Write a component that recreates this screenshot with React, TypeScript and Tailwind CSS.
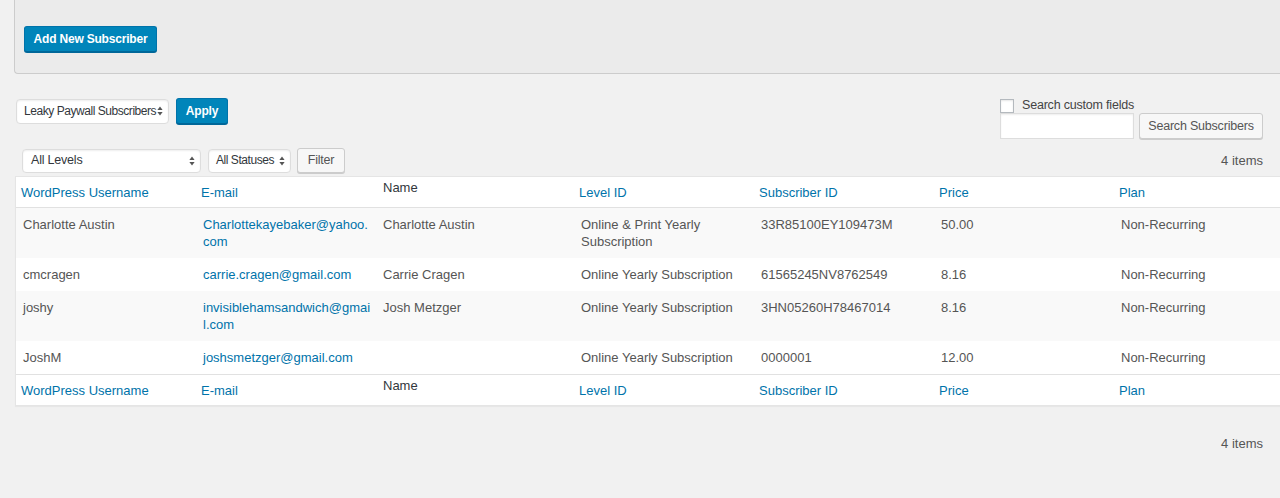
import React from 'react';

// Leaky Paywall subscriber list (wp-admin style)

type Row = {
  user: string;
  email: string[];
  name: string;
  level: string;
  subId: string;
  price: string;
  plan: string;
};

const rows: Row[] = [
  {
    user: 'Charlotte Austin',
    email: ['Charlottekayebaker@yahoo.', 'com'],
    name: 'Charlotte Austin',
    level: 'Online & Print Yearly Subscription',
    subId: '33R85100EY109473M',
    price: '50.00',
    plan: 'Non-Recurring',
  },
  {
    user: 'cmcragen',
    email: ['carrie.cragen@gmail.com'],
    name: 'Carrie Cragen',
    level: 'Online Yearly Subscription',
    subId: '61565245NV8762549',
    price: '8.16',
    plan: 'Non-Recurring',
  },
  {
    user: 'joshy',
    email: ['invisiblehamsandwich@gmai', 'l.com'],
    name: 'Josh Metzger',
    level: 'Online Yearly Subscription',
    subId: '3HN05260H78467014',
    price: '8.16',
    plan: 'Non-Recurring',
  },
  {
    user: 'JoshM',
    email: ['joshsmetzger@gmail.com'],
    name: '',
    level: 'Online Yearly Subscription',
    subId: '0000001',
    price: '12.00',
    plan: 'Non-Recurring',
  },
];

const SelectArrows = () => (
  <svg width="6" height="10" viewBox="0 0 6 10" className="shrink-0">
    <path d="M3 0.5 L5.6 4 L0.4 4 Z" fill="#555" />
    <path d="M3 9.5 L5.6 6 L0.4 6 Z" fill="#555" />
  </svg>
);

const FakeSelect = ({
  label,
  className,
  small = false,
}: {
  label: string;
  className: string;
  small?: boolean;
}) => (
  <div
    className={`flex items-center justify-between bg-white border border-[#ddd] rounded-[4px] shadow-[inset_0_1px_2px_rgba(0,0,0,0.07)] text-[#32373c] ${
      small ? 'text-[12px] tracking-[-0.45px]' : 'text-[12.5px] tracking-[-0.2px]'
    } ${className}`}
  >
    <span className="whitespace-nowrap">{label}</span>
    <SelectArrows />
  </div>
);

const HeaderCells = ({ footer = false }: { footer?: boolean }) => {
  const border = footer ? 'border-t border-[#e1e1e1]' : 'border-b border-[#e1e1e1]';
  const link = `text-left align-top font-normal text-[#0073aa] pl-[5px] pt-[7px] pb-[6px] ${border}`;
  return (
    <tr className="h-[31px]">
      <th className={link}>WordPress Username</th>
      <th className={link}>E-mail</th>
      <th className={`text-left align-top font-normal text-[#32373c] pl-[7px] pt-[2px] ${border}`}>Name</th>
      <th className={link}>Level ID</th>
      <th className={link}>Subscriber ID</th>
      <th className={link}>Price</th>
      <th className={link}>Plan</th>
    </tr>
  );
};

const primaryBtn =
  'bg-[#0085ba] border border-[#0073aa] border-b-[#006799] rounded-[3px] shadow-[0_1px_0_#006799] text-white font-bold text-[12px] tracking-[-0.2px]';
const secondaryBtn =
  'bg-[#f7f7f7] border border-[#ccc] rounded-[3px] shadow-[0_1px_0_#ccc] text-[#555] text-[12.5px] tracking-[-0.2px]';

export default function App() {
  return (
    <div
      className="w-[1280px] h-[498px] overflow-hidden bg-[#f1f1f1] text-[13px] leading-[17px] text-[#555]"
      style={{ fontFamily: '"Liberation Sans", Arial, sans-serif' }}
    >
      {/* top panel */}
      <div className="ml-[14px] h-[74px] bg-[#ebebeb] border-l border-b border-[#ccc] rounded-bl-[4px] pt-[26px] pl-[9px]">
        <button className={`h-[26px] w-[133px] ${primaryBtn}`}>Add New Subscriber</button>
      </div>

      {/* bulk actions + search */}
      <div className="mt-[24px] flex justify-between items-start pl-[16px] pr-[17px]">
        <div className="flex items-center gap-[7px]">
          <FakeSelect label="Leaky Paywall Subscribers" small className="w-[153px] h-[25px] pl-[7px] pr-[5px]" />
          <button className={`h-[26px] w-[52px] ${primaryBtn}`}>Apply</button>
        </div>
        <div className="flex flex-col">
          <label className="flex items-center gap-[8px] h-[15px] text-[#444] text-[12.5px] tracking-[-0.2px]">
            <span className="w-[14px] h-[14px] bg-white border border-[#b4b9be] shadow-[inset_0_1px_2px_rgba(0,0,0,0.1)]" />
            <span>Search custom fields</span>
          </label>
          <div className="flex items-center gap-[5px]">
            <div className="w-[134px] h-[26px] bg-white border border-[#ddd] shadow-[inset_0_1px_2px_rgba(0,0,0,0.07)]" />
            <button className={`w-[124px] h-[26px] ${secondaryBtn}`}>Search Subscribers</button>
          </div>
        </div>
      </div>

      {/* filters */}
      <div className="mt-[9px] h-[25px] flex items-center justify-between pl-[22px] pr-[17px]">
        <div className="flex items-center">
          <FakeSelect label="All Levels" className="w-[179px] h-[24px] pl-[8px] pr-[5px]" />
          <FakeSelect label="All Statuses" small className="ml-[7px] w-[83px] h-[24px] pl-[7px] pr-[5px]" />
          <button className={`ml-[6px] w-[48px] h-[25px] ${secondaryBtn}`}>Filter</button>
        </div>
        <span>4 items</span>
      </div>

      {/* table */}
      <div className="mt-[3px] ml-[15px]">
        <table className="w-[1275px] table-fixed border-separate border-spacing-0 bg-white border border-[#e5e5e5] shadow-[0_1px_1px_rgba(0,0,0,0.04)]">
          <colgroup>
            <col className="w-[180px]" />
            <col className="w-[180px]" />
            <col className="w-[198px]" />
            <col className="w-[180px]" />
            <col className="w-[180px]" />
            <col className="w-[180px]" />
            <col />
          </colgroup>
          <thead>
            <HeaderCells />
          </thead>
          <tbody>
            {rows.map((r, i) => (
              <tr key={r.user} className={i % 2 === 0 ? 'bg-[#f9f9f9]' : 'bg-white'}>
                <td className="align-top pl-[7px] pr-[10px] py-[8px]">{r.user}</td>
                <td className="align-top pl-[7px] pr-[4px] py-[8px] text-[#0073aa]">
                  {r.email.map((part) => (
                    <div key={part} className="whitespace-nowrap">
                      {part}
                    </div>
                  ))}
                </td>
                <td className="align-top pl-[7px] pr-[10px] py-[8px]">{r.name}</td>
                <td className="align-top pl-[7px] pr-[10px] py-[8px]">{r.level}</td>
                <td className="align-top pl-[7px] pr-[10px] py-[8px]">{r.subId}</td>
                <td className="align-top pl-[7px] pr-[10px] py-[8px]">{r.price}</td>
                <td className="align-top pl-[7px] pr-[10px] py-[8px]">{r.plan}</td>
              </tr>
            ))}
          </tbody>
          <tfoot>
            <HeaderCells footer />
          </tfoot>
        </table>
      </div>

      <div className="mt-[29px] pr-[17px] text-right">4 items</div>
    </div>
  );
}
